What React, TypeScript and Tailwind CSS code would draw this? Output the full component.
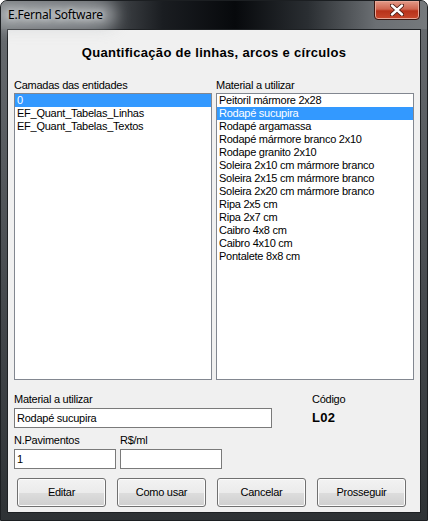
import React from "react";

const camadas = ["0", "EF_Quant_Tabelas_Linhas", "EF_Quant_Tabelas_Textos"];

const materiais = [
  "Peitoril mármore 2x28",
  "Rodapé sucupira",
  "Rodapé argamassa",
  "Rodapé mármore branco 2x10",
  "Rodape granito 2x10",
  "Soleira 2x10 cm mármore branco",
  "Soleira 2x15 cm mármore branco",
  "Soleira 2x20 cm mármore branco",
  "Ripa 2x5 cm",
  "Ripa 2x7 cm",
  "Caibro 4x8 cm",
  "Caibro 4x10 cm",
  "Pontalete 8x8 cm",
];

function ListBox({ items, selected }: { items: string[]; selected: number }) {
  return (
    <div className="h-[287px] w-[198px] border border-[#828790] bg-white">
      {items.map((item, i) => (
        <div
          key={item}
          className={`h-[13px] pl-[2px] leading-[13px] whitespace-nowrap ${
            i === selected ? "bg-[#3399ff] text-white" : "text-black"
          }`}
        >
          {item}
        </div>
      ))}
    </div>
  );
}

function TextBox({ value, width }: { value: string; width: string }) {
  return (
    <div className={`${width} h-[20px] border border-[#7a7a7a] bg-white pl-[2px] leading-[18px] text-black`}>
      {value}
    </div>
  );
}

function Button({ label }: { label: string }) {
  return (
    <div className="flex h-[29px] w-[89px] items-center justify-center rounded-[3px] border border-[#707070] bg-[linear-gradient(#f2f2f2_0%,#ebebeb_50%,#dddddd_51%,#cfcfcf_100%)] text-black shadow-[inset_0_0_0_1px_#fcfcfc]">
      {label}
    </div>
  );
}

export default function App() {
  return (
    <div className="h-[521px] w-[428px] overflow-hidden rounded-t-[7px] border border-[#1c1f22] bg-[linear-gradient(#6a6e72,#44484c_60%,#2e3235)] font-['Liberation_Sans',Arial,sans-serif] text-[11px] tracking-[-0.25px]">
      {/* barra de título */}
      <div className="relative h-[28px] bg-[linear-gradient(90deg,#6d7174_0%,#5a5e62_20%,#1a1d21_38%,#07090c_55%,#2a2e32_72%,#6b6f73_88%,#75797c_100%)]">
        <div className="absolute left-[-10px] top-[2px] h-[24px] w-[125px] rounded-full bg-[#c4c8cb] opacity-70 blur-[8px]" />
        <span className="absolute left-[7px] top-[6px] font-['Noto_Sans',sans-serif] text-[12px] leading-[16px] tracking-[-0.2px] text-black [text-shadow:0_0_6px_#ffffff]">
          E.Fernal Software
        </span>
        <div className="absolute right-[7px] top-[-1px] flex h-[20px] w-[46px] items-center justify-center rounded-b-[4px] border border-[#3b1610] bg-[linear-gradient(#e39a88_0%,#cf6650_45%,#b8321a_55%,#c8482c_100%)] shadow-[inset_0_0_0_1px_#e8a898]">
          <svg width="14" height="12" viewBox="0 0 14 12">
            <path d="M2 1.5 L12 10.5 M12 1.5 L2 10.5" stroke="#4a1a12" strokeWidth="4.2" strokeLinecap="round" />
            <path d="M2 1.5 L12 10.5 M12 1.5 L2 10.5" stroke="#ffffff" strokeWidth="2.4" strokeLinecap="round" />
          </svg>
        </div>
      </div>

      {/* área do diálogo */}
      <div className="ml-[6px] mr-[6px] flex h-[484px] flex-col border border-[#1e2124] bg-[#f0f0f0] pl-[6px] text-black">
        <div className="mt-[15px] h-[16px] pr-[6px] text-center text-[13px] font-bold leading-[16px] tracking-[0.3px]">
          Quantificação de linhas, arcos e círculos
        </div>

        <div className="mt-[18px] flex gap-[4px]">
          <div className="flex flex-col">
            <div className="h-[14px] leading-[13px]">Camadas das entidades</div>
            <ListBox items={camadas} selected={0} />
          </div>
          <div className="flex flex-col">
            <div className="h-[14px] leading-[13px]">Material a utilizar</div>
            <ListBox items={materiais} selected={1} />
          </div>
        </div>

        <div className="mt-[13px] flex">
          <div className="flex flex-col">
            <div className="h-[15px] leading-[13px]">Material a utilizar</div>
            <TextBox value="Rodapé sucupira" width="w-[258px]" />
          </div>
          <div className="ml-[40px] flex flex-col">
            <div className="h-[15px] leading-[13px]">Código</div>
            <div className="text-[13px] font-bold leading-[20px] tracking-[0.3px]">L02</div>
          </div>
        </div>

        <div className="mt-[6px] flex gap-[4px]">
          <div className="flex flex-col">
            <div className="h-[15px] leading-[13px]">N.Pavimentos</div>
            <TextBox value="1" width="w-[102px]" />
          </div>
          <div className="flex flex-col">
            <div className="h-[15px] leading-[13px]">R$/ml</div>
            <TextBox value="" width="w-[102px]" />
          </div>
        </div>

        <div className="mt-[9px] ml-[3px] flex gap-[11px]">
          <Button label="Editar" />
          <Button label="Como usar" />
          <Button label="Cancelar" />
          <Button label="Prosseguir" />
        </div>
      </div>
    </div>
  );
}
